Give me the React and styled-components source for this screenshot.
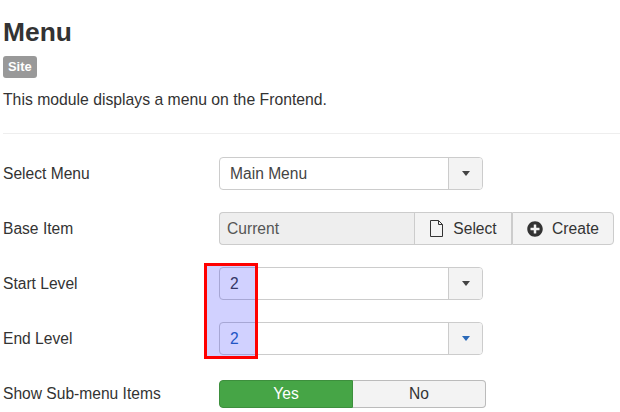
import React from "react";
import styled, { createGlobalStyle } from "styled-components";
import { FaPlusCircle } from "react-icons/fa";

const GlobalStyle = createGlobalStyle`
  html, body {
    margin: 0;
    padding: 0;
    background: #fff;
  }
  body {
    font-family: "Liberation Sans", Arial, sans-serif;
    font-size: 15.6px;
    color: #333;
    overflow: hidden;
  }
`;

function CaretSelect({ value, active }) {
  return (
    <SelectBox>
      <SelectValue $active={active}>{value}</SelectValue>
      <CaretCell>
        <Caret $active={active} />
      </CaretCell>
    </SelectBox>
  );
}

function FileIcon() {
  return (
    <svg width="15" height="17" viewBox="0 0 15 17" fill="none" stroke="#333" strokeWidth="1">
      <path d="M1.5 0.5H9.5L13.5 4.5V16.5H1.5Z" />
      <path d="M9.5 0.5V4.5H13.5" />
    </svg>
  );
}

export default function App() {
  return (
    <Page>
      <GlobalStyle />
      <Title>Menu</Title>
      <Badge>Site</Badge>
      <Description>This module displays a menu on the Frontend.</Description>
      <Divider />
      <Fields>
        <Row>
          <Label>Select Menu</Label>
          <CaretSelect value="Main Menu" />
        </Row>
        <Row>
          <Label>Base Item</Label>
          <InputGroup>
            <ReadOnly>Current</ReadOnly>
            <GroupButton $width={98}>
              <FileIcon />
              Select
            </GroupButton>
            <GroupButton $width={102} $last>
              <FaPlusCircle size={16} />
              Create
            </GroupButton>
          </InputGroup>
        </Row>
        <Row>
          <Label>Start Level</Label>
          <CaretSelect value="2" />
        </Row>
        <Row>
          <Label>End Level</Label>
          <CaretSelect value="2" active />
        </Row>
        <Highlight />
        <ToggleRow>
          <Label>Show Sub-menu Items</Label>
          <Toggle>
            <ToggleOption $on>Yes</ToggleOption>
            <ToggleOption>No</ToggleOption>
          </Toggle>
        </ToggleRow>
      </Fields>
    </Page>
  );
}

const Page = styled.div`
  width: 620px;
  height: 412px;
  padding: 15px 0 0 3px;
  box-sizing: border-box;
  overflow: hidden;
`;

const Title = styled.h1`
  margin: 0;
  font-size: 26.4px;
  line-height: 34px;
  font-weight: 700;
  color: #333;
`;

const Badge = styled.span`
  display: inline-block;
  margin-top: 7px;
  padding: 0 5px;
  height: 22px;
  line-height: 22px;
  border-radius: 3px;
  background: #999;
  color: #fff;
  font-size: 12.9px;
  font-weight: 700;
`;

const Description = styled.p`
  margin: 12px 0 0;
  line-height: 20px;
  font-size: 15.75px;
`;

const Divider = styled.hr`
  margin: 23px 0 0;
  border: 0;
  border-top: 1px solid #eee;
`;

const Fields = styled.div`
  position: relative;
  display: flex;
  flex-direction: column;
  gap: 22px;
  padding-top: 23px;
`;

const Row = styled.div`
  display: flex;
  align-items: center;
  height: 33px;
`;

const ToggleRow = styled(Row)`
  margin-top: 3px;
  height: 28px;
`;

const Label = styled.label`
  width: 216px;
  flex: none;
`;

const SelectBox = styled.div`
  display: flex;
  width: 264px;
  height: 33px;
  box-sizing: border-box;
  border: 1px solid #ccc;
  border-radius: 4px;
  background: #fff;
  overflow: hidden;
`;

const SelectValue = styled.div`
  flex: 1;
  padding-left: 10px;
  line-height: 31px;
  color: ${(p) => (p.$active ? "#2a69b8" : "#444")};
`;

const CaretCell = styled.div`
  width: 33px;
  display: flex;
  align-items: center;
  justify-content: center;
  background: #f3f3f3;
  border-left: 1px solid #ccc;
`;

const Caret = styled.span`
  width: 0;
  height: 0;
  border-left: 4.5px solid transparent;
  border-right: 4.5px solid transparent;
  border-top: 5px solid ${(p) => (p.$active ? "#2a69b8" : "#444")};
`;

const InputGroup = styled.div`
  display: flex;
  height: 33px;
`;

const ReadOnly = styled.div`
  width: 195px;
  box-sizing: border-box;
  padding-left: 7px;
  line-height: 31px;
  background: #eee;
  color: #555;
  border: 1px solid #ccc;
  border-radius: 4px 0 0 4px;
  border-right: 0;
`;

const GroupButton = styled.div`
  width: ${(p) => p.$width}px;
  box-sizing: border-box;
  display: flex;
  align-items: center;
  justify-content: center;
  gap: 9px;
  background: #f3f3f3;
  color: #333;
  border: 1px solid #ccc;
  border-radius: ${(p) => (p.$last ? "0 4px 4px 0" : "0")};
`;

const Toggle = styled.div`
  display: flex;
  width: 267px;
  height: 28px;
`;

const ToggleOption = styled.div`
  flex: ${(p) => (p.$on ? "0 0 134px" : "1")};
  box-sizing: border-box;
  text-align: center;
  line-height: 26px;
  background: ${(p) => (p.$on ? "#46a546" : "#f3f3f3")};
  color: ${(p) => (p.$on ? "#fff" : "#333")};
  border: 1px solid ${(p) => (p.$on ? "#3d8f3d" : "#bbb")};
  border-radius: ${(p) => (p.$on ? "4px 0 0 4px" : "0 4px 4px 0")};
  ${(p) => (p.$on ? "" : "border-left: 0;")}
`;

const Highlight = styled.div`
  position: absolute;
  left: 201px;
  top: 129px;
  width: 54px;
  height: 96px;
  box-sizing: border-box;
  border: 3px solid #f00;
  background: rgba(0, 0, 255, 0.18);
`;
